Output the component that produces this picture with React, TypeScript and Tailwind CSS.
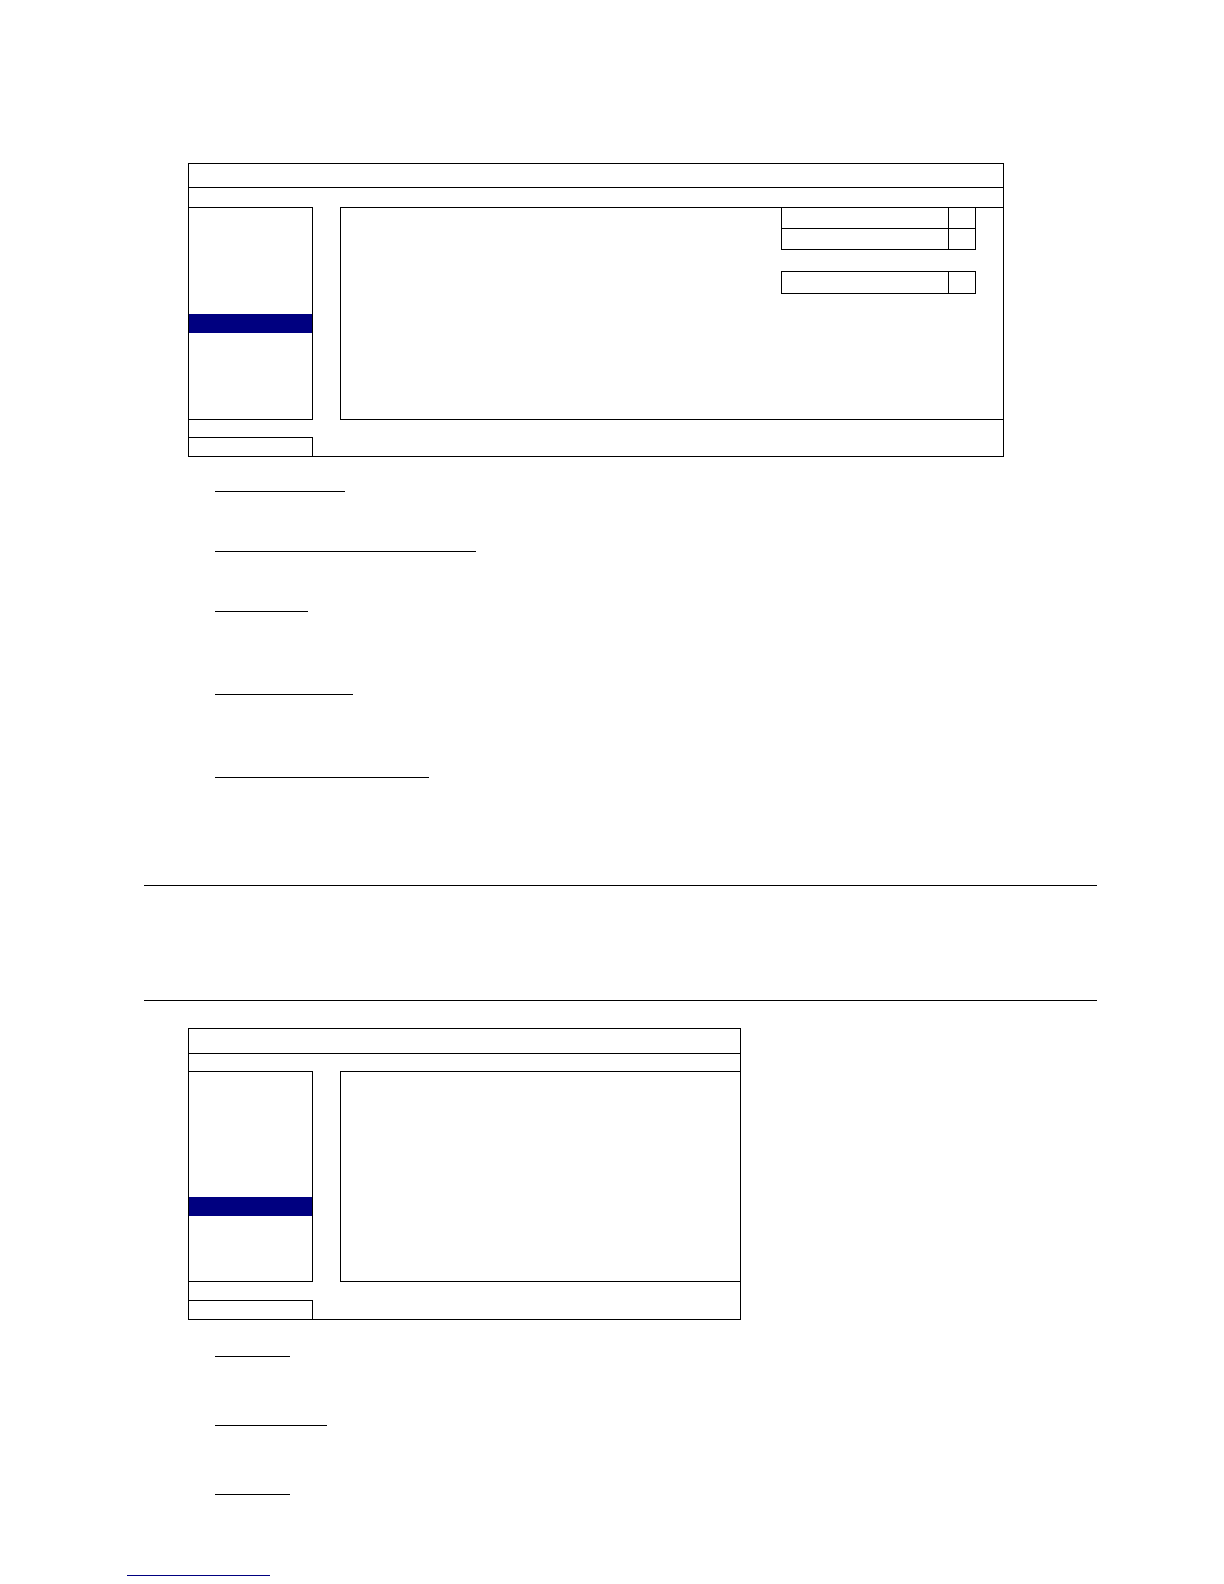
// App.tsx — manual page: two menu screen diagrams with underlined headings (text-free layout)

type FigureProps = {
  wide: boolean;
};

// a box of the on-screen menu: title bar, sub bar, side list, content panel, footer tab
function MenuFigure({ wide }: FigureProps) {
  return (
    <div
      className={
        wide
          ? 'ml-[188px] w-[816px] border border-black flex flex-col'
          : 'ml-[188px] w-[553px] border border-black flex flex-col'
      }
    >
      <div className={wide ? 'h-[24px] border-b border-black' : 'h-[25px] border-b border-black'} />
      <div className={wide ? 'h-[19px]' : 'h-[17px]'} />
      <div className={wide ? 'flex h-[213px]' : 'flex h-[211px]'}>
        {/* side list */}
        <div className="w-[124px] border-t border-r border-b border-black flex flex-col">
          <div className={wide ? 'mt-[106px] h-[19px] bg-[#000080]' : 'mt-[125px] h-[19px] bg-[#000080]'} />
        </div>
        <div className="w-[27px]" />
        {/* content panel */}
        <div className="flex-1 border-t border-l border-b border-black">
          {wide && (
            <div className="ml-[440px] w-[195px] -mt-px flex flex-col">
              <div className="border-l border-r border-t border-black">
                <div className="flex h-[21px] border-b border-black">
                  <div className="w-[167px] border-r border-black" />
                  <div className="flex-1" />
                </div>
                <div className="flex h-[21px] border-b border-black">
                  <div className="w-[167px] border-r border-black" />
                  <div className="flex-1" />
                </div>
              </div>
              <div className="mt-[21px] flex h-[23px] border border-black">
                <div className="w-[167px] border-r border-black" />
                <div className="flex-1" />
              </div>
            </div>
          )}
        </div>
      </div>
      <div className={wide ? 'h-[17px]' : 'h-[18px]'} />
      <div className="w-[124px] h-[19px] border-t border-r border-black" />
    </div>
  );
}

export default function App() {
  return (
    <div
      className="w-[1224px] min-h-[1584px] bg-white pt-[163px] flex flex-col"
      style={{ fontFamily: '"Liberation Sans", Arial, sans-serif' }}
    >
      <MenuFigure wide />

      {/* underlined item headings */}
      <div className="ml-[215px] mt-[34px] w-[130px] h-px bg-black" />
      <div className="ml-[215px] mt-[59px] w-[261px] h-px bg-black" />
      <div className="ml-[215px] mt-[59px] w-[93px] h-px bg-black" />
      <div className="ml-[215px] mt-[82px] w-[138px] h-px bg-black" />
      <div className="ml-[215px] mt-[82px] w-[214px] h-px bg-black" />

      {/* section rules */}
      <div className="ml-[144px] mt-[107px] w-[953px] h-px bg-black" />
      <div className="ml-[144px] mt-[114px] w-[953px] h-px bg-black" />

      <div className="mt-[27px]">
        <MenuFigure wide={false} />
      </div>

      <div className="ml-[215px] mt-[36px] w-[75px] h-px bg-black" />
      <div className="ml-[215px] mt-[68px] w-[112px] h-px bg-black" />
      <div className="ml-[215px] mt-[68px] w-[75px] h-px bg-black" />

      {/* footnote link */}
      <div className="ml-[127px] mt-[80px] w-[143px] h-px bg-[#000080]" />
    </div>
  );
}
